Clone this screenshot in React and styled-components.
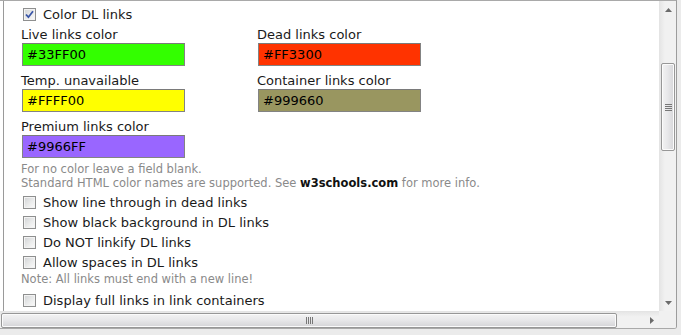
import React from "react";
import styled, { createGlobalStyle } from "styled-components";

const Global = createGlobalStyle`
  html, body { margin: 0; padding: 0; }
  body {
    width: 681px; height: 335px; overflow: hidden;
    background: #ebebeb;
    font-family: Verdana, "DejaVu Sans", sans-serif;
  }
`;

const Frame = styled.div`
  width: 677px;
  height: 329px;
  box-sizing: border-box;
  border-top: 1px solid #a9a9a9;
  border-right: 1px solid #9c9c9c;
  border-bottom: 1px solid #a9a9a9;
  border-bottom-right-radius: 3px;
  background: #fff;
  display: grid;
  grid-template-columns: 1fr 17px;
  grid-template-rows: 310px 17px;
  overflow: hidden;
`;

const Viewport = styled.div`
  overflow: hidden;
  padding-left: 3px;
`;

const Panel = styled.div`
  border-left: 1px solid #9a9a9a;
  padding: 3px 0 0 17px;
  height: 100%;
  box-sizing: border-box;
  color: #1a1a1a;
  font-size: 13px;
`;

const CheckRow = styled.label`
  display: flex;
  align-items: center;
  height: 20px;
  gap: 7px;
  padding-left: 2px;
  margin-top: ${(p) => p.$mt || 0}px;
  white-space: nowrap;
`;

const Box = styled.span`
  width: 13px;
  height: 13px;
  box-sizing: border-box;
  border: 1px solid #8e8f8f;
  background: linear-gradient(135deg, #d0d2d4 0%, #eceded 60%, #fbfbfb 100%);
  box-shadow: inset 0 0 0 1px #f3f3f3;
  display: flex;
  align-items: center;
  justify-content: center;
  flex: none;
`;

const Fields = styled.div`
  display: grid;
  grid-template-columns: 236px 236px;
  row-gap: 5px;
  margin-top: 1px;
`;

const Field = styled.div`
  display: flex;
  flex-direction: column;
`;

const Label = styled.span`
  line-height: 17px;
  height: 17px;
  padding-top: 1px;
  white-space: nowrap;
`;

const ColorInput = styled.div`
  margin-left: 1px;
  width: 163px;
  height: 23px;
  box-sizing: border-box;
  border: 1px solid #838383;
  border-top-color: #7a7a7a;
  background: ${(p) => p.$bg};
  padding-left: 4px;
  display: flex;
  align-items: center;
  color: #000;
`;

const Note = styled.div`
  font-size: 11.5px;
  line-height: 14px;
  color: #8a8a8a;
  margin-top: ${(p) => p.$mt || 0}px;
  white-space: nowrap;
  b { color: #111; font-weight: bold; }
`;

const VBar = styled.div`
  background: linear-gradient(90deg, #e6e6e6 0%, #f1f1f1 30%, #f1f1f1 100%);
  border-left: 1px solid #e4e4e4;
  display: flex;
  flex-direction: column;
  align-items: center;
`;

const ArrowBtn = styled.div`
  height: 17px;
  width: 100%;
  display: flex;
  align-items: center;
  justify-content: center;
  flex: none;
`;

const VTrack = styled.div`
  flex: 1;
  width: 100%;
  padding-top: 45px;
  display: flex;
  justify-content: center;
`;

const VThumb = styled.div`
  width: 14px;
  height: 88px;
  box-sizing: border-box;
  border: 1px solid #979797;
  border-radius: 2px;
  background: linear-gradient(90deg, #f3f3f3 0%, #e8e8ea 45%, #d6d6d9 100%);
  box-shadow: inset 0 0 0 1px #fbfbfb;
  display: flex;
  align-items: center;
  justify-content: center;
`;

const HBar = styled.div`
  background: linear-gradient(180deg, #e6e6e6 0%, #f1f1f1 30%, #f1f1f1 100%);
  border-top: 1px solid #e4e4e4;
  display: flex;
  align-items: center;
`;

const HThumb = styled.div`
  margin-left: 1px;
  width: 616px;
  height: 15px;
  box-sizing: border-box;
  border: 1px solid #979797;
  border-radius: 2px;
  background: linear-gradient(180deg, #f3f3f3 0%, #e8e8ea 45%, #d4d4d7 100%);
  box-shadow: inset 0 0 0 1px #fbfbfb;
  display: flex;
  align-items: center;
  justify-content: center;
`;

const HRest = styled.div`
  flex: 1;
  display: flex;
  justify-content: flex-end;
  padding-right: 5px;
`;

const Corner = styled.div`
  background: #f0f0f0;
`;

const Check = ({ checked, children, mt }) => (
  <CheckRow $mt={mt}>
    <Box>
      {checked && (
        <svg width="9" height="9" viewBox="0 0 9 9">
          <path d="M1 4.5 L3.4 7.2 L8 1.2" fill="none" stroke="#3a56a8" strokeWidth="1.8" />
        </svg>
      )}
    </Box>
    <span>{children}</span>
  </CheckRow>
);

const fields = [
  ["Live links color", "#33FF00"],
  ["Dead links color", "#FF3300"],
  ["Temp. unavailable", "#FFFF00"],
  ["Container links color", "#999660"],
  ["Premium links color", "#9966FF"],
];

export default function App() {
  return (
    <>
      <Global />
      <Frame>
        <Viewport>
          <Panel>
            <Check checked>Color DL links</Check>
            <Fields>
              {fields.map(([l, c]) => (
                <Field key={l}>
                  <Label>{l}</Label>
                  <ColorInput $bg={c}>{c}</ColorInput>
                </Field>
              ))}
            </Fields>
            <Note $mt={4}>For no color leave a field blank.</Note>
            <Note>
              Standard HTML color names are supported. See <b>w3schools.com</b> for more info.
            </Note>
            <Check mt={2}>Show line through in dead links</Check>
            <Check>Show black background in DL links</Check>
            <Check>Do NOT linkify DL links</Check>
            <Check>Allow spaces in DL links</Check>
            <Note>Note: All links must end with a new line!</Note>
            <Check mt={4}>Display full links in link containers</Check>
          </Panel>
        </Viewport>
        <VBar>
          <ArrowBtn>
            <svg width="7" height="4" viewBox="0 0 7 4"><path d="M0 4 L3.5 0 L7 4Z" fill="#6b6b6b" /></svg>
          </ArrowBtn>
          <VTrack>
            <VThumb>
              <svg width="7" height="7" viewBox="0 0 7 7">
                <path d="M0 0.5H7M0 2.5H7M0 4.5H7M0 6.5H7" stroke="#777" strokeWidth="1" />
              </svg>
            </VThumb>
          </VTrack>
          <ArrowBtn>
            <svg width="7" height="4" viewBox="0 0 7 4"><path d="M0 0 L3.5 4 L7 0Z" fill="#6b6b6b" /></svg>
          </ArrowBtn>
        </VBar>
        <HBar>
          <HThumb>
            <svg width="7" height="7" viewBox="0 0 7 7">
              <path d="M0.5 0V7M2.5 0V7M4.5 0V7M6.5 0V7" stroke="#777" strokeWidth="1" />
            </svg>
          </HThumb>
          <HRest>
            <svg width="4" height="7" viewBox="0 0 4 7"><path d="M0 0 L4 3.5 L0 7Z" fill="#6b6b6b" /></svg>
          </HRest>
        </HBar>
        <Corner />
      </Frame>
    </>
  );
}
